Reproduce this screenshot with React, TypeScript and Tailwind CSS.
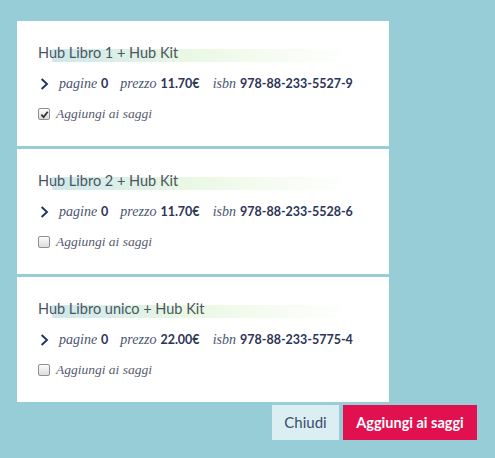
type Book = {
  title: string;
  pages: number;
  price: string;
  isbn: string;
  checked: boolean;
};

const books: Book[] = [
  { title: "Hub Libro 1 + Hub Kit", pages: 0, price: "11.70€", isbn: "978-88-233-5527-9", checked: true },
  { title: "Hub Libro 2 + Hub Kit", pages: 0, price: "11.70€", isbn: "978-88-233-5528-6", checked: false },
  { title: "Hub Libro unico + Hub Kit", pages: 0, price: "22.00€", isbn: "978-88-233-5775-4", checked: false },
];

const serif = "font-['Liberation_Serif',serif] italic";
const sans = "font-['Lato','Liberation_Sans',sans-serif]";

function Checkbox({ checked }: { checked: boolean }) {
  return (
    <span className="flex h-[12px] w-[12px] items-center justify-center rounded-[2px] border border-[#8f8f8f] bg-gradient-to-b from-[#fcfcfc] to-[#dcdcdc]">
      {checked && (
        <svg viewBox="0 0 10 10" className="h-[9px] w-[9px]">
          <path d="M1.5 5.2 L4 7.8 L8.6 2" fill="none" stroke="#333" strokeWidth="2" />
        </svg>
      )}
    </span>
  );
}

function Chevron() {
  return (
    <svg viewBox="0 0 9 12" className="h-[12px] w-[9px]">
      <path d="M1.6 1 L7 6 L1.6 11" fill="none" stroke="#1f3560" strokeWidth="1.9" />
    </svg>
  );
}

function BookCard({ book }: { book: Book }) {
  return (
    <div className="h-[125px] bg-white pl-[21px] pt-[19px]">
      {/* Title with soft gradient highlight underneath */}
      <div className="relative h-[20px]">
        <span className="absolute left-[14px] top-[9px] h-[13px] w-[298px] bg-[linear-gradient(to_right,#cde7eb,#eaf8e3_45%,#ffffff)]" />
        <span className={`relative text-[14.5px] leading-[20px] text-[#4d5560] ${sans}`}>{book.title}</span>
      </div>

      {/* Meta row */}
      <div className="mt-[14px] flex h-[20px] items-center text-[14px] leading-[20px]">
        <span className="ml-[2px] flex">
          <Chevron />
        </span>
        <span className={`ml-[10px] text-[#4a5472] ${serif}`}>pagine</span>
        <span className={`ml-[4px] text-[12.5px] font-bold text-[#2c3457] ${sans}`}>{book.pages}</span>
        <span className={`ml-[12px] text-[#4a5472] ${serif}`}>prezzo</span>
        <span className={`ml-[4px] text-[12.5px] font-bold text-[#2c3457] ${sans}`}>{book.price}</span>
        <span className={`ml-[13px] text-[#4a5472] ${serif}`}>isbn</span>
        <span className={`ml-[4px] text-[12.5px] font-bold text-[#2c3457] ${sans}`}>{book.isbn}</span>
      </div>

      {/* Add checkbox */}
      <div className="mt-[10px] flex h-[20px] items-center gap-[6px]">
        <Checkbox checked={book.checked} />
        <span className={`text-[13.5px] leading-[20px] text-[#555b6e] ${serif}`}>Aggiungi ai saggi</span>
      </div>
    </div>
  );
}

export default function App() {
  return (
    <div className="h-[458px] w-[495px] bg-[#96cdd6] pl-[17px] pt-[21px]">
      <div className="flex w-[372px] flex-col gap-[3px]">
        {books.map((b) => (
          <BookCard key={b.isbn} book={b} />
        ))}
      </div>
      <div className="mr-[18px] mt-[3px] flex justify-end gap-[4px]">
        <button className={`h-[35px] w-[67px] bg-[#dbeff2] text-[15px] text-[#3d4b6b] ${sans}`}>Chiudi</button>
        <button className={`h-[35px] w-[134px] bg-[#e11150] text-[14.5px] font-bold text-white ${sans}`}>
          Aggiungi ai saggi
        </button>
      </div>
    </div>
  );
}
